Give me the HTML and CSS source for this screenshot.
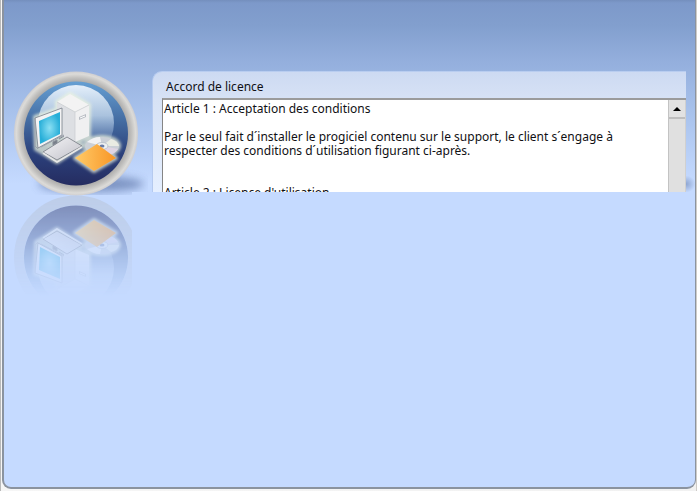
FILE: index.html
```html
<!DOCTYPE html>
<html lang="fr">
<head>
<meta charset="utf-8">
<title>Accord de licence</title>
<link rel="stylesheet" href="styles.css">
</head>
<body>
<main class="window">
  <svg class="emblem" viewBox="4 62 144 248" aria-hidden="true">
    <defs>
      <linearGradient id="blue" x1="0" y1="0" x2="0" y2="1"><stop offset="0" stop-color="#659fd3"/><stop offset=".4" stop-color="#42699f"/><stop offset=".7" stop-color="#2b407b"/><stop offset="1" stop-color="#252c60"/></linearGradient>
      <linearGradient id="gloss" x1="0" y1="0" x2="0" y2="1"><stop offset="0" stop-color="#e4effa"/><stop offset=".4" stop-color="#b5cbe4" stop-opacity=".9"/><stop offset=".8" stop-color="#7e9bc8" stop-opacity=".2"/><stop offset="1" stop-color="#7e9bc8" stop-opacity="0"/></linearGradient>
      <radialGradient id="ring"><stop offset=".83" stop-color="#aaa9a8"/><stop offset=".9" stop-color="#c3c2c0"/><stop offset=".96" stop-color="#dcdbd8"/><stop offset="1" stop-color="#cfced0"/></radialGradient>
      <radialGradient id="screen"><stop offset="0" stop-color="#8be0f4"/><stop offset="1" stop-color="#27aed8"/></radialGradient>
      <linearGradient id="folder"><stop offset="0" stop-color="#ffcb69"/><stop offset="1" stop-color="#f89525"/></linearGradient>
      <linearGradient id="metal" x1="0" y1="0" x2="1" y2="1"><stop offset="0" stop-color="#f6f6f8"/><stop offset="1" stop-color="#c0c0c8"/></linearGradient>
      <linearGradient id="fade" gradientUnits="userSpaceOnUse" x1="0" y1="195" x2="0" y2="296"><stop offset="0" stop-color="#fff" stop-opacity=".48"/><stop offset=".5" stop-color="#fff" stop-opacity=".27"/><stop offset="1" stop-color="#fff" stop-opacity="0"/></linearGradient>
      <mask id="mirror" maskUnits="userSpaceOnUse" x="4" y="195" width="128" height="110"><rect x="4" y="195" width="128" height="110" fill="url(#fade)"/></mask>
      <filter id="soft" x="-30%" y="-80%" width="160%" height="260%"><feGaussianBlur stdDeviation="4"/></filter>
      <filter id="glow" x="-20%" y="-20%" width="140%" height="140%"><feGaussianBlur stdDeviation="1.4"/></filter>
      <clipPath id="ground"><path d="M4 62h144v130h-16v3H4z"/></clipPath>
    </defs>
    <g clip-path="url(#ground)"><ellipse cx="91" cy="184" rx="53" ry="8" fill="#6f87b8" opacity=".85" filter="url(#soft)"/></g>
    <circle cx="76" cy="133.500" r="62" fill="url(#ring)"/>
    <g id="badge">
      <circle cx="76" cy="133.500" r="52" fill="url(#blue)"/>
      <circle cx="76" cy="123" r="38" fill="url(#gloss)"/>
      <g fill="#edf4df" stroke="#edf4df" stroke-width="4" stroke-linejoin="round" opacity=".75" filter="url(#glow)">
        <path d="M57 102l13-8 19 11v32l-14 6-18-10zM35 117l27-9v28l21 9-26 17-14-9-7-4z"/>
        <path d="M75 158l22-14 19 14-22 13z"/><ellipse cx="102" cy="146" rx="17" ry="9"/>
      </g>
      <path d="M57 102l13-8 19 11-14 7z" fill="#f3f3f3"/>
      <path d="M57 102l18 10v31l-18-9z" fill="#dddfe3"/>
      <path d="M75 112l14-7v31l-14 6z" fill="#f0f0f1"/>
      <path d="M57 102l18 10v30M75 112l14-7" fill="none" stroke="#c8cbd0" stroke-width=".7"/>
      <path d="M79 117l7-3v3l-7 3z" fill="#b8bcc3"/><path d="M80 118l5-2" stroke="#fff"/>
      <path d="M35 118l27-10v27l-24 13z" fill="#f3f3f4" stroke="#777e89" stroke-width=".8"/>
      <path d="M39 121l21-9v22l-20 10z" fill="url(#screen)"/>
      <path d="M35 118v28l3 3M41 147l23-12" fill="none" stroke="#9ba1ab"/>
      <path d="M43 152l24-15 15 9-25 14z" fill="url(#metal)" stroke="#777b84" stroke-width=".8"/>
      <path d="M43 153l14 9 25-15" fill="none" stroke="#e7e7e7" stroke-width="1.500"/>
      <path d="M53 142l4-2v3l-4 2zM59 139l5-3" fill="#777e89" stroke="#858b95"/>
      <ellipse cx="102" cy="146" rx="17" ry="9" fill="#cbd0d7"/>
      <path d="M102 146L87 142q6-5 13-5z" fill="#f2f2f4"/>
      <path d="M102 146l9-7q7 2 8 7z" fill="#e9ece3"/>
      <path d="M102 146l16 3q-3 5-9 6z" fill="#dfd5e4"/>
      <ellipse cx="102" cy="146" rx="6" ry="3.500" fill="#edf0f2" stroke="#aeb7c3" stroke-width=".7"/>
      <ellipse cx="102" cy="146" rx="2.500" ry="1.500" fill="#6b7ca5"/>
      <path d="M75 158l22-14 19 14-22 13z" fill="url(#folder)"/>
    </g>
    <g mask="url(#mirror)"><circle cx="76" cy="257.500" r="57" fill="none" stroke="#b6c0d0" stroke-width="10"/><use href="#badge" transform="matrix(1 0 0 -1 0 391)"/></g>
  </svg>
  <section class="panel">
    <label class="title" for="licence">Accord de licence</label>
    <div class="reader">
      <textarea id="licence" class="terms" readonly>Article 1 : Acceptation des conditions

Par le seul fait d´installer le progiciel contenu sur le support, le client s´engage à
respecter des conditions d´utilisation figurant ci-après.


Article 2 : Licence d'utilisation</textarea>
      <div class="scroll"><button class="up" type="button" aria-label="Défiler vers le haut"><svg viewBox="0 0 8 4" width="8" height="4" aria-hidden="true"><path d="M0 4l4-4 4 4z"/></svg></button></div>
    </div>
  </section>
  <div class="edge"><i class="shade"></i></div>
</main>
</body>
</html>
```
FILE: styles.css
```css
* { box-sizing: border-box; }
body {
  margin: 0;
  min-height: 100vh;
  padding: 0 1px 2px 2px;
  display: flex;
  background: linear-gradient(90deg, #b9b9b9 1px, #f6f6f6 1px, #f1f1f1 calc(100% - 1px), #cfccc8 calc(100% - 1px));
  font: 12px/14px "Noto Sans", "Open Sans", sans-serif;
  color: #101014;
}
.window {
  flex: 1;
  display: grid;
  grid-template-columns: 144px minmax(0, 1fr) 9px;
  align-items: start;
  padding-top: 62px;
  border: 2px solid #8b939f;
  border-top: 0;
  border-right-width: 1px;
  border-radius: 0 0 9px 9px;
  background: linear-gradient(#748fbd 0, #7d99ca 3px, #829fce 25px, #94afdd 62px, #a7c1eb 110px, #c5daff 184px, #c5daff 100%);
}
.emblem { display: block; width: 100%; }
.panel {
  margin-top: 9px;
  margin-left: 4px;
  height: 121px;
  padding: 8px 0 0 9px;
  display: flex;
  flex-direction: column;
  overflow: hidden;
  border-top: 1px solid #b9cdf0;
  border-left: 1px solid #b5caef;
  border-radius: 10px 0 0 0;
  background: linear-gradient(#cddaf2, #d7e2f5 28px, #e5efff);
}
.title { padding-left: 4px; margin-bottom: 4px; }
.reader {
  flex: 1;
  min-height: 0;
  display: flex;
  border-top: 2px solid #9b9b9b;
  border-left: 1px solid #858585;
}
.terms {
  flex: 1;
  min-width: 0;
  height: 100%;
  padding: 2px 1px 0;
  border: 0;
  outline: 0;
  resize: none;
  overflow: hidden;
  background: #fff;
  color: inherit;
  font: inherit;
}
.scroll {
  width: 18px;
  border-left: 1px solid #c3c3c3;
  border-right: 1px solid #d0d0d0;
  background: #e0e0e0;
}
.up {
  display: grid;
  place-items: center;
  width: 100%;
  height: 19px;
  padding: 0;
  border: 0;
  border-bottom: 2px solid #bebebe;
  background: #e2e2e2;
}
.edge {
  height: 130px;
  display: flex;
  align-items: end;
  overflow: hidden;
}
.shade {
  flex: 1;
  height: 16px;
  background: radial-gradient(ellipse at 0 50%, #8ea5d0, transparent 75%);
}
```
